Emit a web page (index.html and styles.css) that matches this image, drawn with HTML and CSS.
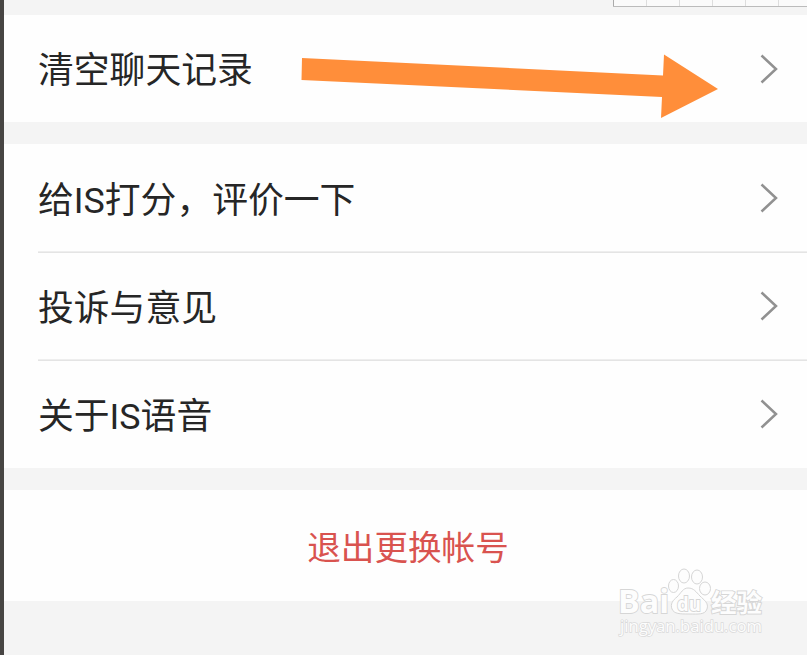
FILE: index.html
```html
<!DOCTYPE html>
<html lang="zh-CN">

<head>
    <meta charset="UTF-8">
    <meta name="viewport" content="width=device-width, initial-scale=1.0">
    <title>设置</title>
    <link rel="stylesheet" href="styles.css">
</head>

<body>
    <div class="page">
        <div class="ruler"><i></i><i></i><i></i><i></i><i></i><i></i></div>

        <div class="group">
            <div class="row first">
                <span>清空聊天记录</span>
                <svg class="chevron" width="20" height="32" viewBox="0 0 20 32"><path d="M2.500 2.500 L17 16 L2.500 29.500" /></svg>
            </div>
        </div>

        <div class="group">
            <div class="row">
                <span>给IS打分，评价一下</span>
                <svg class="chevron" width="20" height="32" viewBox="0 0 20 32"><path d="M2.500 2.500 L17 16 L2.500 29.500" /></svg>
            </div>
            <div class="row">
                <span>投诉与意见</span>
                <svg class="chevron" width="20" height="32" viewBox="0 0 20 32"><path d="M2.500 2.500 L17 16 L2.500 29.500" /></svg>
            </div>
            <div class="row">
                <span>关于IS语音</span>
                <svg class="chevron" width="20" height="32" viewBox="0 0 20 32"><path d="M2.500 2.500 L17 16 L2.500 29.500" /></svg>
            </div>
        </div>

        <div class="group logout">退出更换帐号</div>

        <svg class="arrow" width="420" height="68" viewBox="300 53 420 68">
            <path d="M302 58 L663 75.500 L664 54.500 L718 89 L661 118 L662 97 L301.500 80 Z" />
        </svg>

        <svg class="watermark" width="160" height="80" viewBox="610 562 160 80">
            <text class="brand" x="618" y="613" textLength="51" lengthAdjust="spacingAndGlyphs">Bai</text>
            <ellipse cx="673.500" cy="586" rx="5" ry="6.500" />
            <ellipse cx="684" cy="576" rx="5.500" ry="7" />
            <ellipse cx="697" cy="577" rx="5.500" ry="7" />
            <ellipse cx="705" cy="588.500" rx="5.500" ry="6.500" />
            <path d="M688 588 C683 588 681 593 677 597 C673 600 670 604 672 609 C674 614 680 614 689 614 C698 614 705 615 707 609 C709 603 704 600 700 596 C696 592 694 588 688 588 Z" />
            <text class="du" x="677" y="610.500" textLength="24" lengthAdjust="spacingAndGlyphs">du</text>
            <text class="cn" x="711" y="611.500" textLength="51" lengthAdjust="spacingAndGlyphs">经验</text>
            <text class="site" x="620" y="632" textLength="142" lengthAdjust="spacingAndGlyphs">jingyan.baidu.com</text>
        </svg>
    </div>
</body>

</html>
```
FILE: styles.css
```css
body {
    margin: 0;
    font-family: Roboto, "Noto Sans CJK SC", sans-serif;
    background-color: #f4f4f4;
}

.page {
    position: relative;
    box-sizing: border-box;
    height: 655px;
    border-left: 4px solid #474543;
    overflow: hidden;
}

.ruler {
    display: flex;
    box-sizing: border-box;
    width: 194px;
    height: 7px;
    margin: 0 0 8px auto;
    border-bottom: 1px solid #bbb;
    background: #fafafa;
}

.ruler i {
    box-sizing: border-box;
    flex: 0 0 33px;
    border-left: 1px solid #ddd;
}

.ruler i:first-child {
    border-color: #aaa;
}

.group {
    margin-bottom: 22px;
    padding-left: 34px;
    background: #fefefe;
}

.row {
    display: flex;
    align-items: center;
    justify-content: space-between;
    box-sizing: border-box;
    height: 108px;
    padding: 0 28px 0 0;
    font-size: 35.8px;
    line-height: 52px;
    color: #262626;
}

.row span {
    padding-top: 6px;
}

.row.first {
    height: 107px;
}

.row.first span {
    padding-top: 4px;
}

/* the line sits on the top edge of the next row */
.row + .row {
    box-shadow: inset 0 1px #e4e4e4, 0 -1px #eee;
}

.chevron {
    fill: none;
    stroke: #919191;
    stroke-width: 2.5;
}

.logout {
    display: flex;
    align-items: center;
    justify-content: center;
    height: 111px;
    margin: 0;
    padding: 0 0 0 5px;
    font-size: 33.6px;
    color: #d9534f;
}

.arrow {
    position: absolute;
    left: 296px;
    top: 53px;
    fill: #ff8e3a;
}

/* outlined logo over the bottom corner */
.watermark {
    position: absolute;
    left: 606px;
    top: 562px;
    fill: #fdfdfd;
    stroke: #d6d6d6;
    stroke-width: 1;
}

.watermark text {
    paint-order: stroke;
    stroke-width: 1.8px;
}

.brand {
    font: bold 33px "Open Sans", sans-serif;
}

.du {
    font: bold 20px "Open Sans", sans-serif;
}

.cn {
    font: bold 25px "Noto Sans CJK SC", sans-serif;
}

.watermark .site {
    font: 17px "Open Sans", sans-serif;
    stroke: #dadada;
    stroke-width: 1.5px;
}
```
